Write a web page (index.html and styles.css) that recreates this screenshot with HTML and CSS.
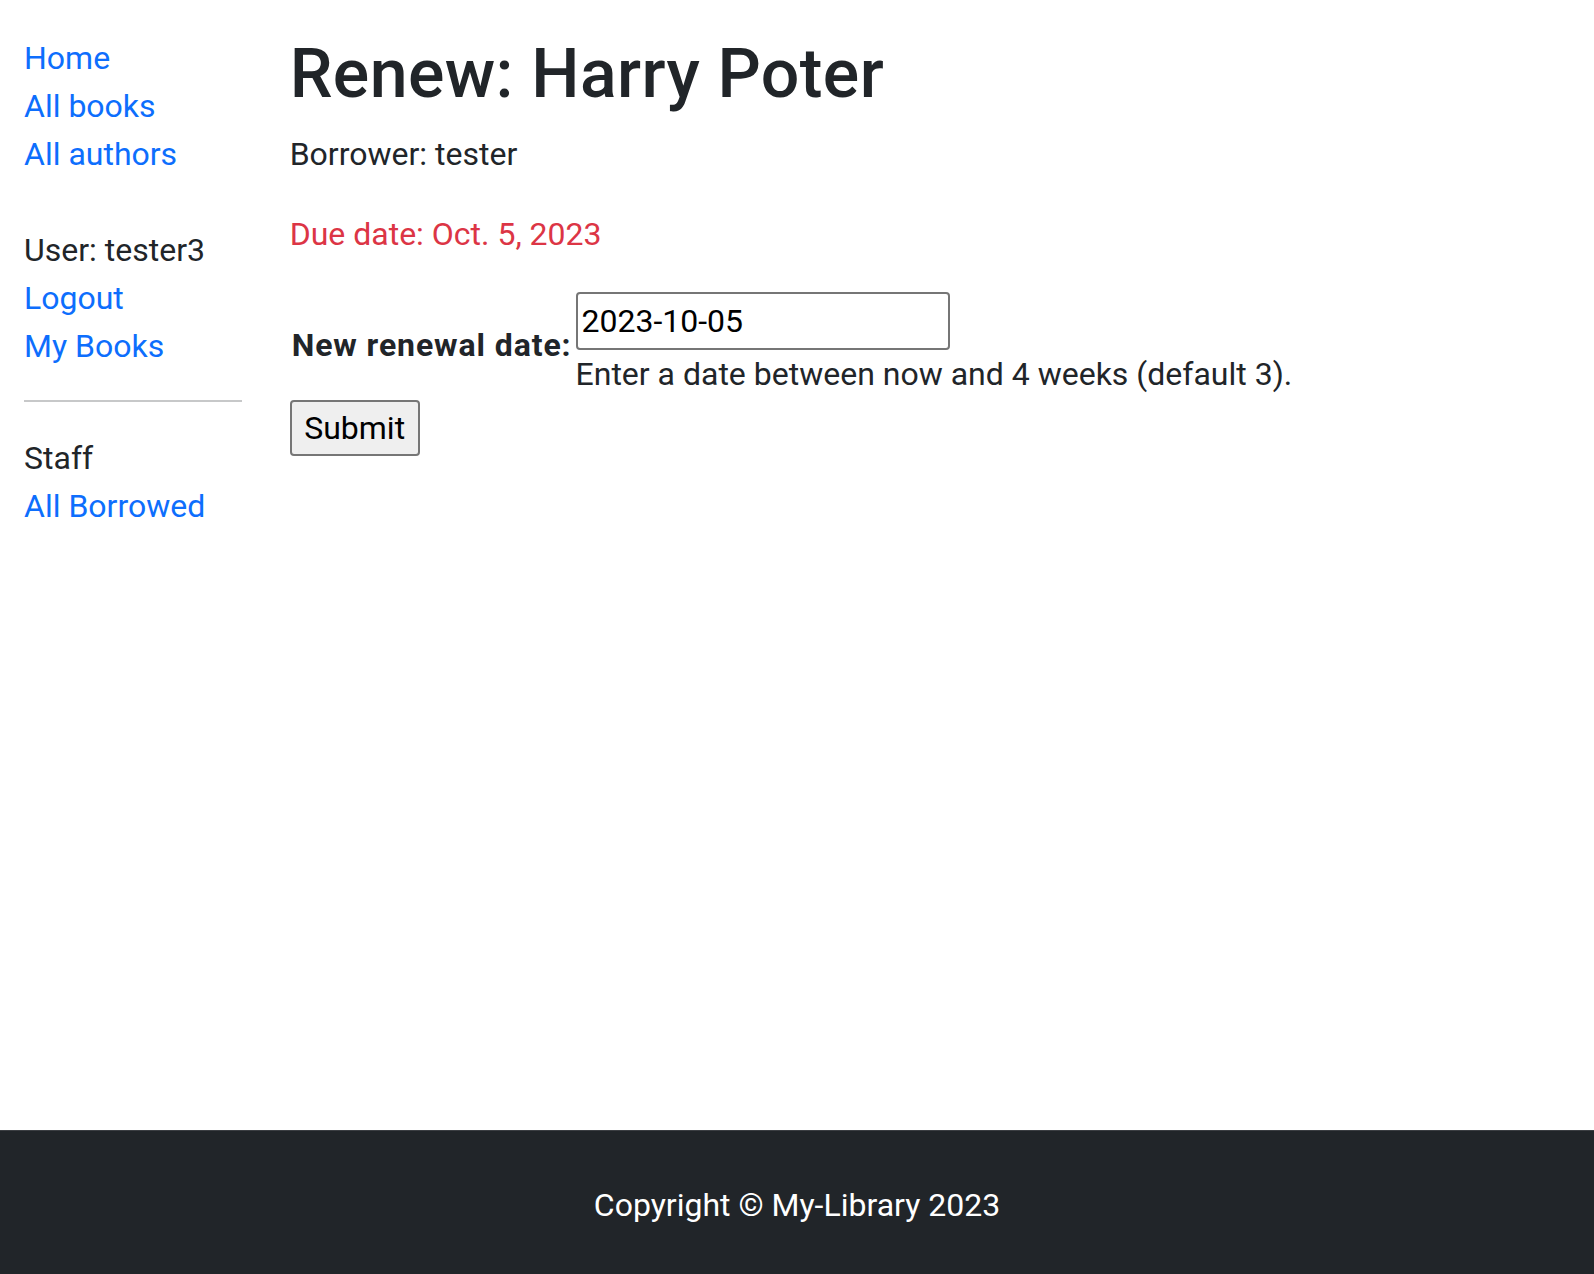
FILE: index.html
```html
<!DOCTYPE html>
<html lang="en">
<head>
<meta charset="utf-8">
<title>Local Library</title>
<link rel="stylesheet" href="styles.css">
</head>
<body>
<div class="page">
  <div class="container">
    <div class="row">
      <div class="sidebar">
        <ul class="nav-list">
          <li><a href="#">Home</a></li>
          <li><a href="#">All books</a></li>
          <li><a href="#">All authors</a></li>
        </ul>
        <ul class="nav-list user-list">
          <li>User: tester3</li>
          <li><a href="#">Logout</a></li>
          <li><a href="#">My Books</a></li>
        </ul>
        <hr class="divider">
        <ul class="nav-list">
          <li>Staff</li>
          <li><a href="#">All Borrowed</a></li>
        </ul>
      </div>
      <div class="main">
        <h1 class="title">Renew: Harry Poter</h1>
        <p class="para">Borrower: tester</p>
        <p class="para danger">Due date: Oct. 5, 2023</p>
        <form class="renew-form">
          <table class="form-table">
            <tr>
              <th class="label-cell"><label for="id_renewal_date">New renewal date:</label></th>
              <td class="field-cell"><input type="text" id="id_renewal_date" class="text-input" value="2023-10-05"><br><span class="helptext">Enter a date between now and 4 weeks (default 3).</span></td>
            </tr>
          </table>
          <input type="submit" class="submit-btn" value="Submit">
        </form>
      </div>
    </div>
  </div>
  <footer class="footer">Copyright © My-Library 2023</footer>
</div>
</body>
</html>
```

FILE: styles.css
```css
* { box-sizing: border-box; }
html, body { margin: 0; padding: 0; }
body {
  font-family: Roboto, "Liberation Sans", sans-serif;
  font-size: 32px;
  line-height: 48px;
  color: #212529;
  background: #fff;
}
.page {
  min-height: 1274px;
  display: flex;
  flex-direction: column;
}
.container {
  padding: 34px 24px 0;
  flex: 1 0 auto;
}
.row {
  display: flex;
  margin: 0 -24px;
}
.sidebar {
  width: 16.6667%;
  padding: 0 24px;
}
.main {
  width: 83.3333%;
  padding: 0 24px;
}
.nav-list {
  list-style: none;
  margin: 0 0 48px;
  padding: 0;
}
.user-list { margin-bottom: 30px; }
.nav-list a {
  color: #0d6efd;
  text-decoration: none;
}
.divider {
  margin: 0 0 32px;
  border: 0;
  border-top: 2px solid #212529;
  opacity: 0.25;
}
.title {
  margin: 0 0 14px;
  font-size: 68px;
  font-weight: 500;
  line-height: 1.2;
  letter-spacing: 0.4px;
}
.para { margin: 0 0 32px; }
.danger { color: #dc3545; }
.renew-form { margin: 0; }
.form-table {
  border-collapse: collapse;
}
.label-cell {
  padding: 2px;
  font-weight: 700;
  text-align: left;
  vertical-align: middle;
  letter-spacing: 0.9px;
}
.field-cell {
  padding: 2px;
  vertical-align: middle;
}
.text-input {
  font-family: inherit;
  font-size: 32px;
  line-height: 48px;
  width: 374px;
  height: 58px;
  padding: 2px 4px;
  border: 2px solid #767676;
  border-radius: 4px;
  color: #000;
  vertical-align: baseline;
}
.helptext { color: #212529; }
.submit-btn {
  font-family: inherit;
  font-size: 32px;
  line-height: 48px;
  height: 56px;
  width: 130px;
  margin-top: 0;
  padding: 2px 12px;
  border: 2px solid #767676;
  border-radius: 4px;
  background: #efefef;
  color: #000;
}
.footer {
  background: #212529;
  border-top: 1px solid #3b3e42;
  color: #fff;
  text-align: center;
  padding: 50px 0 45px;
}
```
